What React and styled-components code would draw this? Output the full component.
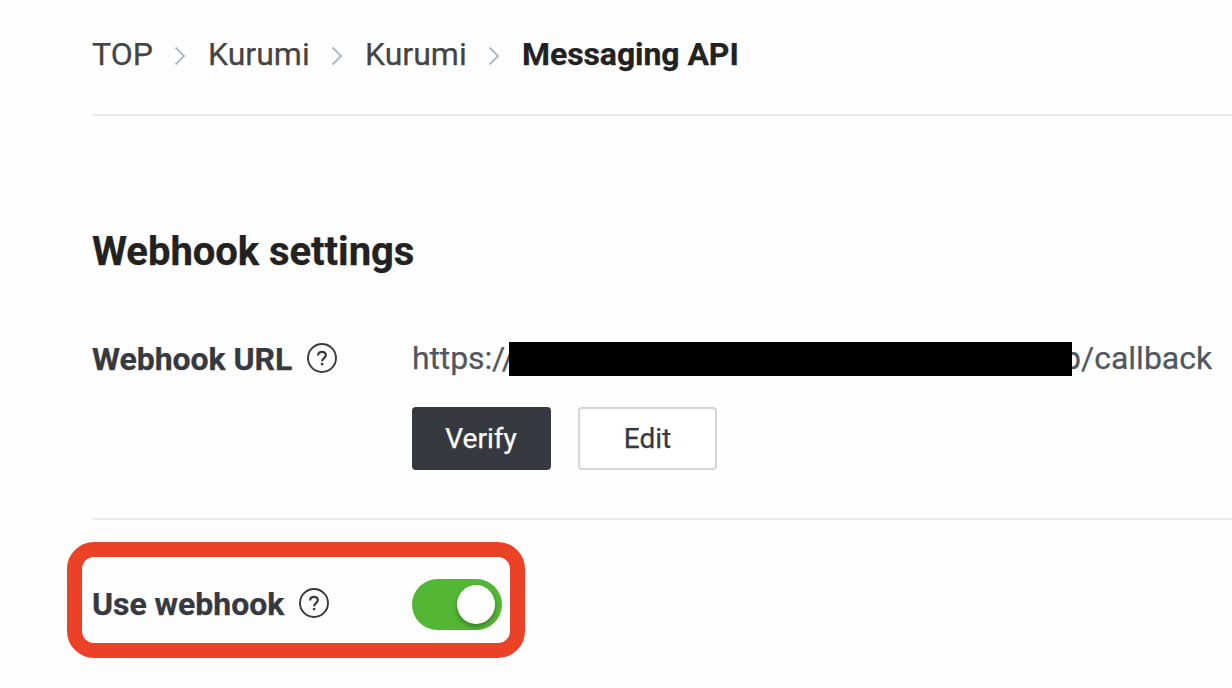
import React from "react";
import styled, { createGlobalStyle } from "styled-components";

const GlobalStyle = createGlobalStyle`
  * { box-sizing: border-box; }
  body {
    margin: 0;
    background: #fefefe;
    font-family: Roboto, "Liberation Sans", sans-serif;
    -webkit-text-stroke: 0.25px currentColor;
    overflow: hidden;
  }
`;

const Page = styled.main`
  height: 688px;
  padding-left: 92px;
  overflow: hidden;
`;

const Breadcrumb = styled.nav`
  display: flex;
  height: 116px;
  padding-top: 34px;
  border-bottom: 2px solid #ebebeb;
  font-size: 32px;
  line-height: 40px;
  white-space: nowrap;
`;

const Crumb = styled.span`
  width: ${(p) => (p.$width ? `${p.$width}px` : "auto")};
  font-weight: ${(p) => (p.$current ? 700 : 400)};
  color: ${(p) => (p.$current ? "#222" : "#444")};
  letter-spacing: ${(p) => (p.$current ? "-0.08px" : "0")};
`;

const Chevron = styled.svg`
  flex: none;
  width: 12px;
  height: 20px;
  margin: 12px 22px 0 21px;
`;

const Title = styled.h2`
  margin: 112px 0 0;
  font-size: 40px;
  font-weight: 700;
  line-height: 48px;
  letter-spacing: -0.04px;
  color: #222;
`;

const Setting = styled.section`
  display: flex;
  align-items: flex-start;
`;

const UrlSetting = styled(Setting)`
  height: 244px;
  padding-top: 63px;
  border-bottom: 2px solid #ebebeb;
`;

const Label = styled.div`
  display: flex;
  align-items: center;
  flex: none;
  gap: 14px;
  width: 320px;
  font-size: 32px;
  font-weight: 700;
  line-height: 40px;
  letter-spacing: -0.04px;
  color: #363a40;
  white-space: nowrap;
`;

const LabelText = styled.span`
  width: ${(p) => p.$width}px;
`;

const HelpSvg = styled.svg`
  width: 32px;
  height: 32px;
  flex: none;
  margin-top: -2px;
`;

const Url = styled.div`
  display: flex;
  font-size: 32px;
  line-height: 38px;
  color: #50575e;
  white-space: nowrap;
`;

const UrlStart = styled.span`
  width: 97px;
  letter-spacing: -0.12px;
`;

const Redaction = styled.span`
  position: relative;
  width: 563px;
  height: 34px;
  margin-top: 3px;
  background: #000;
`;

const UrlEnd = styled.span`
  margin-left: -9px;
`;

const Buttons = styled.div`
  display: flex;
  gap: 27px;
  margin-top: 30px;
`;

const Button = styled.button`
  width: 139px;
  height: 63px;
  padding: ${(p) => (p.$primary ? "0 1px 0 0" : "0")};
  border: 2px solid ${(p) => (p.$primary ? "#36393f" : "#d1d5dc")};
  border-radius: 4px;
  background: ${(p) => (p.$primary ? "#36393f" : "#fff")};
  color: ${(p) => (p.$primary ? "#fff" : "#36393f")};
  font: 400 28px/34px Roboto, "Liberation Sans", sans-serif;
`;

const Highlight = styled(Setting)`
  width: 458px;
  height: 116px;
  margin: 22px 0 0 -25px;
  padding: 22px 0 0 10px;
  border: 15px solid #eb4127;
  border-radius: 27px;
`;

const ToggleLabel = styled(Label)`
  padding-top: 5px;
`;

const Toggle = styled.div`
  flex: none;
  display: flex;
  justify-content: flex-end;
  width: 90px;
  height: 51px;
  padding: 6px 7px 0 0;
  border-radius: 26px;
  background: #53b635;
`;

const Knob = styled.span`
  width: 38px;
  height: 39px;
  border-radius: 50%;
  background: #fff;
  box-shadow: 0 3px 5px rgba(0, 0, 0, 0.3);
`;

function Separator() {
  return (
    <Chevron viewBox="0 0 12 20" fill="none" stroke="#b0b8c3" strokeWidth="2">
      <path d="M1.5 1.5 10 10 1.5 18.5" />
    </Chevron>
  );
}

function HelpIcon() {
  return (
    <HelpSvg viewBox="0 0 32 32" fill="none" stroke="#363a40">
      <circle cx="16" cy="16" r="14" strokeWidth="1.9" />
      <path d="M12.1 13.5C12.1 11.2 13.7 9.9 16 9.9C18.4 9.9 19.8 11.2 19.8 13.3C19.8 16 16.1 16.1 16.1 19.2" strokeWidth="2.2" />
      <circle cx="16.1" cy="22.1" r="1.4" fill="#363a40" stroke="none" />
    </HelpSvg>
  );
}

export default function App() {
  return (
    <>
      <GlobalStyle />
      <Page>
        <Breadcrumb>
          <Crumb $width={61}>TOP</Crumb>
          <Separator />
          <Crumb $width={102}>Kurumi</Crumb>
          <Separator />
          <Crumb $width={102}>Kurumi</Crumb>
          <Separator />
          <Crumb $current>Messaging API</Crumb>
        </Breadcrumb>
        <Title>Webhook settings</Title>
        <UrlSetting>
          <Label>
            <LabelText $width={200}>Webhook URL</LabelText>
            <HelpIcon />
          </Label>
          <div>
            <Url>
              <UrlStart>https://</UrlStart>
              <Redaction />
              <UrlEnd>p/callback</UrlEnd>
            </Url>
            <Buttons>
              <Button $primary>Verify</Button>
              <Button>Edit</Button>
            </Buttons>
          </div>
        </UrlSetting>
        <Highlight>
          <ToggleLabel>
            <LabelText $width={192}>Use webhook</LabelText>
            <HelpIcon />
          </ToggleLabel>
          <Toggle role="switch" aria-checked="true">
            <Knob />
          </Toggle>
        </Highlight>
      </Page>
    </>
  );
}
